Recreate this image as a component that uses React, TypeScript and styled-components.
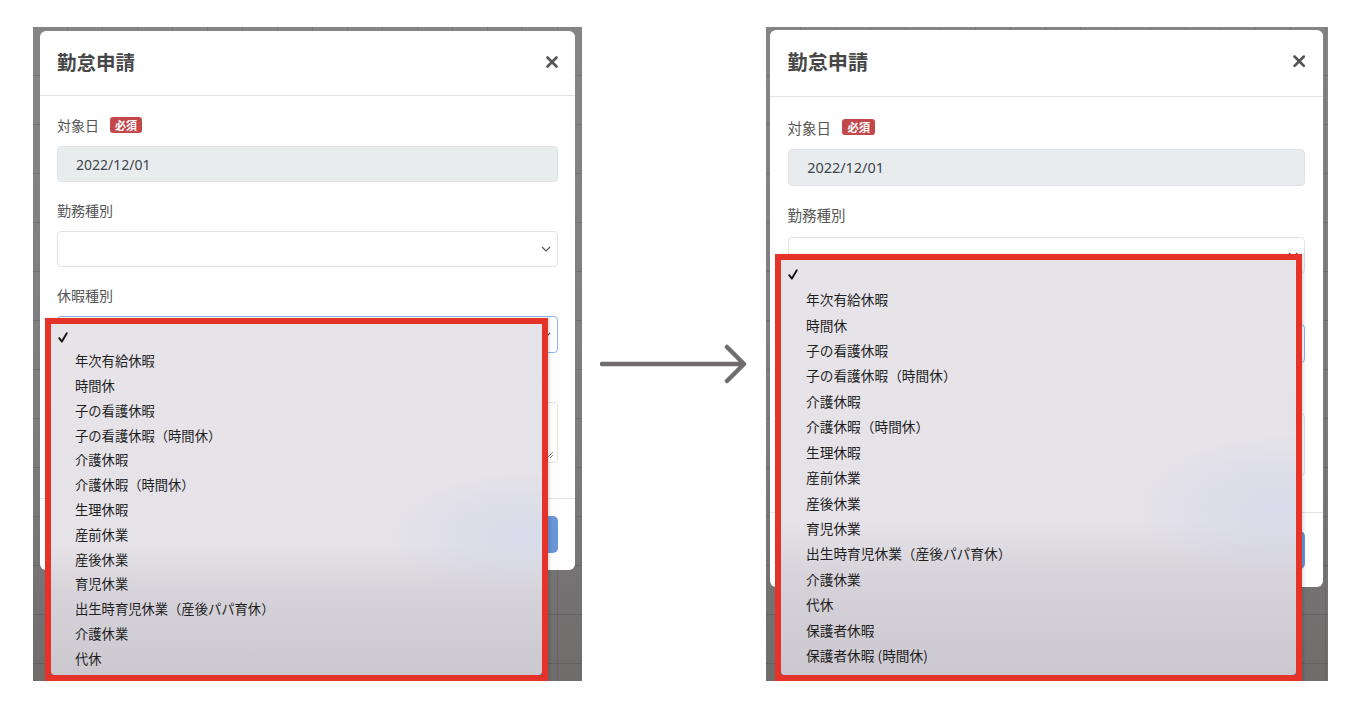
import React from 'react';
import styled, { createGlobalStyle } from 'styled-components';

const LEFT_ITEMS = [
  '年次有給休暇',
  '時間休',
  '子の看護休暇',
  '子の看護休暇（時間休）',
  '介護休暇',
  '介護休暇（時間休）',
  '生理休暇',
  '産前休業',
  '産後休業',
  '育児休業',
  '出生時育児休業（産後パパ育休）',
  '介護休業',
  '代休',
];

const RIGHT_ITEMS = [...LEFT_ITEMS, '保護者休暇', '保護者休暇 (時間休)'];

const GlobalStyle = createGlobalStyle`
  html, body {
    margin: 0;
    padding: 0;
    background: #fff;
  }
  body {
    font-family: 'Noto Sans', 'Noto Sans CJK JP', sans-serif;
  }
  * {
    box-sizing: border-box;
  }
`;

const Page = styled.div`
  display: flex;
  align-items: flex-start;
  width: 1364px;
  height: 712px;
  padding: 27px 0 0 33px;
  overflow: hidden;
`;

const Shot = styled.div<{ $width: number; $pad: string }>`
  position: relative;
  flex: none;
  width: ${({ $width }) => $width}px;
  height: 654px;
  padding: ${({ $pad }) => $pad};
  overflow: hidden;
  background-color: #7d7b7b;
  background-image:
    repeating-linear-gradient(to bottom, transparent 0 48px, rgba(40, 40, 40, 0.18) 48px 49px),
    repeating-linear-gradient(to right, transparent 0 34px, rgba(40, 40, 40, 0.14) 34px 35px),
    linear-gradient(to bottom, #858585 0%, #7e7d7d 60%, #6f6c6c 100%);
`;

const Modal = styled.div<{ $zoom?: number }>`
  width: 535px;
  background: #fff;
  border-radius: 6px;
  zoom: ${({ $zoom = 1 }) => $zoom};
`;

const Header = styled.div`
  display: flex;
  align-items: center;
  justify-content: space-between;
  height: 65px;
  padding: 0 17px 3px;
  border-bottom: 1px solid #e1e4e8;
`;

const Title = styled.h5`
  margin: 0;
  font-family: 'Noto Sans CJK JP', sans-serif;
  font-size: 19.5px;
  font-weight: 700;
  color: #474747;
`;

const Close = styled.button`
  display: flex;
  padding: 0;
  border: none;
  background: none;
  color: #555;
`;

const Body = styled.div`
  display: flex;
  flex-direction: column;
  gap: 19px;
  padding: 20px 17px 35px;
`;

const Field = styled.div`
  display: flex;
  flex-direction: column;
`;

const Label = styled.div`
  display: flex;
  align-items: center;
  height: 18px;
  margin-bottom: 12px;
  font-family: 'Noto Sans CJK JP', sans-serif;
  font-size: 14px;
  color: #555;
`;

const Badge = styled.span`
  display: inline-flex;
  align-items: center;
  height: 16px;
  margin-left: 11px;
  padding: 0 5px;
  border-radius: 3px;
  background: #c4484a;
  font-size: 11px;
  font-weight: 700;
  color: #fff;
`;

const Input = styled.div<{ $disabled?: boolean; $focus?: boolean; $height?: number }>`
  position: relative;
  display: flex;
  align-items: center;
  height: ${({ $height = 37 }) => $height}px;
  padding: 0 18px;
  border: 1px solid ${({ $focus }) => ($focus ? '#8db4ec' : '#dfe3e7')};
  border-radius: 4px;
  background: ${({ $disabled }) => ($disabled ? '#e9ecef' : '#fff')};
  font-family: 'Noto Sans', sans-serif;
  font-size: 14px;
  color: #3f454b;
`;

const Chevron = styled.svg`
  position: absolute;
  right: 6px;
  top: 50%;
  margin-top: -3px;
`;

const Grip = styled.svg`
  position: absolute;
  right: 3px;
  bottom: 3px;
`;

const Footer = styled.div`
  display: flex;
  justify-content: flex-end;
  padding: 17px;
  border-top: 1px solid #e1e4e8;
`;

const Submit = styled.button`
  width: 92px;
  height: 37px;
  border: none;
  border-radius: 5px;
  background: #6a95d8;
  font-family: 'Noto Sans CJK JP', sans-serif;
  font-size: 14px;
  color: #fff;
`;

const ArrowSlot = styled.div`
  flex: none;
  width: 184px;
  padding: 317px 0 0 18px;
`;

const Frame = styled.div<{ $left: number; $top: number; $w: number; $h: number }>`
  position: absolute;
  left: ${({ $left }) => $left}px;
  top: ${({ $top }) => $top}px;
  width: ${({ $w }) => $w}px;
  height: ${({ $h }) => $h}px;
  border: 6px solid #e6332a;
  box-shadow: 2px 0 3px rgba(0, 0, 0, 0.12);
`;

const Menu = styled.ul<{ $font: number }>`
  height: 100%;
  margin: 0;
  padding: 1px 0 0;
  list-style: none;
  border-radius: 0 0 4px 4px;
  background:
    radial-gradient(ellipse 28% 18% at 97% 60%, rgba(204, 212, 234, 0.55), rgba(204, 212, 234, 0) 100%),
    linear-gradient(to bottom, #e6e3e9 0%, #e5e2e8 63%, #d7d3da 76%, #ccc8cf 100%);
  font-family: 'Noto Sans CJK JP', sans-serif;
  font-size: ${({ $font }) => $font}px;
  color: #1f1f1f;
`;

const Row = styled.li<{ $height: number; $indent: number; $lift: number }>`
  position: relative;
  display: flex;
  align-items: center;
  height: ${({ $height }) => $height}px;
  padding-left: ${({ $indent }) => $indent}px;
  padding-bottom: ${({ $lift }) => $lift}px;
  white-space: nowrap;
`;

const Check = styled.svg`
  position: absolute;
  left: 7px;
  top: 50%;
  margin-top: -5px;
`;

interface DialogProps {
  zoom?: number;
}

// the last field's label lies under the open menu in both shots, so it stays empty
const Dialog = ({ zoom }: DialogProps) => (
  <Modal $zoom={zoom}>
    <Header>
      <Title>勤怠申請</Title>
      <Close>
        <svg width="12" height="12" viewBox="0 0 12 12">
          <path d="M1.5 1.5l9 9M10.5 1.5l-9 9" stroke="currentColor" strokeWidth="2.6" strokeLinecap="round" />
        </svg>
      </Close>
    </Header>
    <Body>
      <Field>
        <Label>
          対象日<Badge>必須</Badge>
        </Label>
        <Input $disabled $height={36}>
          2022/12/01
        </Input>
      </Field>
      <Field>
        <Label>勤務種別</Label>
        <Input $height={36}>
          <Chevron width="10" height="6" viewBox="0 0 10 6">
            <path d="M1 1l4 4 4-4" stroke="#555" strokeWidth="1.2" fill="none" />
          </Chevron>
        </Input>
      </Field>
      <Field>
        <Label>休暇種別</Label>
        <Input $focus>
          <Chevron width="10" height="6" viewBox="0 0 10 6">
            <path d="M1 1l4 4 4-4" stroke="#555" strokeWidth="1.2" fill="none" />
          </Chevron>
        </Input>
      </Field>
      <Field>
        <Label />
        <Input $height={61}>
          <Grip width="8" height="8" viewBox="0 0 8 8">
            <path d="M7 1L1 7M7 4L4 7" stroke="#888" strokeWidth="1" />
          </Grip>
        </Input>
      </Field>
    </Body>
    <Footer>
      <Submit>申請</Submit>
    </Footer>
  </Modal>
);

interface OptionsProps {
  items: string[];
  left: number;
  top: number;
  w: number;
  h: number;
  rowHeight: number;
  font: number;
  indent: number;
  lift: number;
}

const Options = ({ items, left, top, w, h, rowHeight, font, indent, lift }: OptionsProps) => (
  <Frame $left={left} $top={top} $w={w} $h={h}>
    <Menu $font={font}>
      <Row $height={rowHeight} $indent={indent} $lift={0}>
        <Check width="10" height="11" viewBox="0 0 10 11">
          <path d="M1.2 6.2l2.7 3.4L8.8 1.2" stroke="#141414" strokeWidth="1.9" strokeLinecap="round" strokeLinejoin="round" fill="none" />
        </Check>
      </Row>
      {items.map((item) => (
        <Row key={item} $height={rowHeight} $indent={indent} $lift={lift}>
          {item}
        </Row>
      ))}
    </Menu>
  </Frame>
);

export default function App() {
  return (
    <>
      <GlobalStyle />
      <Page>
        <Shot $width={549} $pad="4px 0 0 7px">
          <Dialog />
          <Options items={LEFT_ITEMS} left={12} top={291} w={503} h={363} rowHeight={24.8} font={13.3} indent={24} lift={3} />
        </Shot>
        <ArrowSlot>
          <svg width="150" height="40" viewBox="0 0 150 40">
            <path d="M2 20H144M127 3l17 17-17 17" stroke="#706c6c" strokeWidth="4.5" strokeLinecap="round" strokeLinejoin="round" fill="none" />
          </svg>
        </ArrowSlot>
        <Shot $width={562} $pad="3px 0 0 4px">
          <Dialog zoom={1.033} />
          <Options items={RIGHT_ITEMS} left={9} top={227} w={527} h={427} rowHeight={25.43} font={13.7} indent={25} lift={0} />
        </Shot>
      </Page>
    </>
  );
}
